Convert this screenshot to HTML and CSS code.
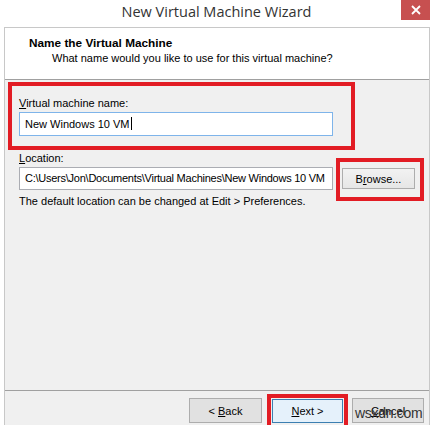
FILE: index.html
```html
<!DOCTYPE html>
<html>
<head>
<meta charset="utf-8">
<link rel="stylesheet" href="styles.css">
</head>
<body>
<div class="window">
  <div class="titlebar">
    <span class="title">New Virtual Machine Wizard</span>
    <div class="close"><svg width="10" height="10" viewBox="0 0 10 10"><path d="M1 1L9 9M9 1L1 9" stroke="#fff" stroke-width="1.8"/></svg></div>
  </div>
  <div class="frame">
    <div class="header">
      <div class="h-title">Name the Virtual Machine</div>
      <div class="h-sub">What name would you like to use for this virtual machine?</div>
    </div>
    <div class="content">
      <div class="mark name-box">
        <div class="label"><u>V</u>irtual machine name:</div>
        <div class="input focused">New Windows 10 VM<span class="caret"></span></div>
      </div>
      <div class="label loc-label"><u>L</u>ocation:</div>
      <div class="loc-row">
        <div class="input loc-input">C:\Users\Jon\Documents\Virtual Machines\New Windows 10 VM</div>
        <div class="mark browse-box"><div class="btn browse"><span>B<u>r</u>owse...</span></div></div>
      </div>
      <div class="note">The default location can be changed at Edit &gt; Preferences.</div>
    </div>
    <div class="footer">
      <div class="btn back"><span>&lt; <u>B</u>ack</span></div>
      <div class="mark next-box"><div class="btn next"><span><u>N</u>ext &gt;</span></div></div>
      <div class="btn cancel"><span><u>C</u>ancel</span></div>
    </div>
  </div>
  <div class="watermark">wsxdn.com</div>
</div>
</body>
</html>
```

FILE: styles.css
```css
* { box-sizing: border-box; }
html, body { margin: 0; padding: 0; background: #fff; }
body { width: 433px; height: 425px; overflow: hidden; font-family: "Liberation Sans", Arial, sans-serif; font-size: 11px; color: #000; }
.window { position: relative; width: 433px; height: 425px; display: flex; flex-direction: column; background: #fff; }
.titlebar { height: 27px; display: flex; align-items: flex-start; justify-content: center; position: relative; }
.title { font-family: "Open Sans", "Noto Sans", sans-serif; font-size: 14.5px; color: #333; line-height: 24px; }
.close { position: absolute; right: 3px; top: 0; width: 29px; height: 20px; background: #c75050; display: flex; align-items: center; justify-content: center; }
.frame { flex: 1; margin: 0 3px 0 4px; border: 1px solid #c8c8c8; border-bottom: none; display: flex; flex-direction: column; background: #f0f0f0; }
.header { height: 52px; background: #fff; border-bottom: 1px solid #a0a0a0; padding: 8px 0 0 24px; }
.h-title { font-weight: bold; line-height: 15px; font-size: 11.8px; }
.h-sub { margin-left: 23px; line-height: 15px; }
.content { flex: 1; padding: 2px 0 0 3px; }
.mark { border: 4px solid #e21c24; }
.name-box { width: 347px; height: 68px; padding: 10px 0 0 7px; }
.label { line-height: 14px; }
.input { background: #fff; border: 1px solid #abadb3; height: 24px; line-height: 22px; padding-left: 5px; white-space: nowrap; overflow: hidden; }
.name-box .input { width: 314px; margin-top: 2px; border-color: #7eb4ea; }
.caret { display: inline-block; width: 1px; height: 13px; background: #000; vertical-align: -2px; margin-left: 1px; }
.loc-label { margin: 1px 0 0 11px; }
.loc-row { display: flex; align-items: flex-start; margin: 2px 0 0 11px; }
.loc-input { width: 314px; height: 23px; line-height: 21px; letter-spacing: -0.25px; }
.browse-box { width: 88px; height: 43px; margin: -9px 0 -11px 3px; padding: 6px 0 0 2px; }
.btn { height: 22px; border: 1px solid #adadad; background: linear-gradient(#f2f2f2, #e6e6e6); display: flex; align-items: center; justify-content: center; white-space: pre; }
.browse { width: 73px; height: 21px; }
.note { margin: 4px 0 0 11px; line-height: 14px; }
.footer { height: 35px; border-top: 1px solid #a0a0a0; display: flex; align-items: flex-start; padding-left: 184px; margin-top: auto; }
.back { width: 73px; height: 25px; margin-top: 7px; background: #e1e1e1; }
.next-box { width: 81px; height: 40px; margin: 3px 0 0 5px; padding: 1px 1px 0 1px; }
.next { width: 71px; height: 24px; border-color: #3c7fb1; background: #e5f1fb; }
.cancel { width: 72px; height: 25px; margin: 7px 0 0 4px; background: #e1e1e1; }
.watermark { position: absolute; left: 355px; top: 405px; font-family: "Liberation Sans", Arial, sans-serif; font-size: 14px; color: #333; letter-spacing: -0.3px; }
```
